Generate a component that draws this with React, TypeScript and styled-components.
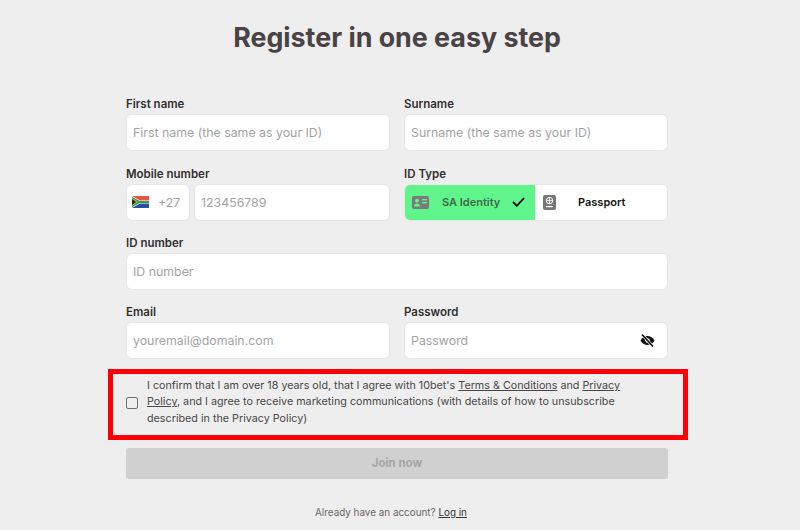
import React from "react";
import styled, { createGlobalStyle } from "styled-components";

const GlobalStyle = createGlobalStyle`
  html, body {
    margin: 0;
    padding: 0;
    background: #eeeeee;
    font-family: Inter, "Liberation Sans", sans-serif;
  }
  * {
    box-sizing: border-box;
  }
`;

const Page = styled.div`
  width: 794px;
  height: 530px;
  overflow: hidden;
  padding-top: 21px;
  display: flex;
  flex-direction: column;
  align-items: center;
`;

const Title = styled.h1`
  margin: 0;
  font-size: 26.8px;
  line-height: 33px;
  font-weight: 700;
  color: #4a4345;
`;

const Form = styled.form`
  width: 542px;
  margin-top: 43.4px;
  display: flex;
  flex-direction: column;
`;

const Row = styled.div`
  display: flex;
  gap: 14px;
  margin-bottom: 15.33px;
`;

const Field = styled.div`
  flex: 1;
  min-width: 0;
`;

const Label = styled.label`
  display: block;
  font-size: 11.5px;
  line-height: 15px;
  font-weight: 600;
  color: #333031;
  margin-bottom: 2px;
`;

const Input = styled.input`
  display: block;
  width: 100%;
  height: 37px;
  border: 1px solid #e6e6e6;
  border-radius: 6px;
  background: #fff;
  padding: 0 6px;
  font-family: inherit;
  font-size: 12.35px;
  color: #333;
  outline: none;

  &::placeholder {
    color: #a3a3a3;
    opacity: 1;
  }
`;

const PhoneRow = styled.div`
  display: flex;
  gap: 4px;
`;

const Prefix = styled.div`
  flex: none;
  width: 64px;
  height: 37px;
  border: 1px solid #e6e6e6;
  border-radius: 6px;
  background: #fff;
  display: flex;
  align-items: center;
  padding-left: 5px;
  gap: 9px;
  font-size: 12.35px;
  color: #a3a3a3;
`;

const Segments = styled.div`
  display: flex;
  height: 37px;
  border-radius: 6px;
  overflow: hidden;
  background: #fff;
  border: 1px solid #e6e6e6;
`;

const Segment = styled.div<{ $active?: boolean }>`
  flex: none;
  width: ${(p) => (p.$active ? "130px" : "132px")};
  display: flex;
  align-items: center;
  padding-left: ${(p) => (p.$active ? "7px" : "8px")};
  background: ${(p) => (p.$active ? "#60f58a" : "#fff")};
  font-size: 11px;
  font-weight: 600;
  color: ${(p) => (p.$active ? "#3d6a4a" : "#111")};
`;

const SegmentText = styled.span<{ $gap: number }>`
  margin-left: ${(p) => p.$gap}px;
`;

const Check = styled.svg`
  margin-left: 12px;
`;

const PasswordBox = styled.div`
  position: relative;
`;

const EyeButton = styled.span`
  position: absolute;
  right: 13px;
  top: 11px;
  display: flex;
`;

const Consent = styled.div`
  width: 580px;
  height: 71px;
  margin: -6px 0 8px -18px;
  border: 5px solid #fb0007;
  padding: 0 13px 3px;
  display: flex;
  align-items: center;
  gap: 9px;
`;

const CheckBox = styled.span`
  flex: none;
  width: 12px;
  height: 12px;
  border: 1.5px solid #6f6f6f;
  border-radius: 2px;
`;

const ConsentText = styled.p`
  margin: 0;
  width: 490px;
  font-size: 10.75px;
  line-height: 16.5px;
  color: #4a4648;
`;

const TextLink = styled.a`
  color: inherit;
  text-decoration: underline;
`;

const JoinButton = styled.button`
  height: 31px;
  border: none;
  border-radius: 3px;
  background: #d0d0d0;
  color: #a5a5a5;
  font-family: inherit;
  font-size: 11.5px;
  font-weight: 700;
`;

const Footer = styled.p`
  margin: 26px 0 0;
  padding-right: 12px;
  text-align: center;
  font-size: 9.9px;
  line-height: 14px;
  color: #6a6668;
`;

const FooterLink = styled(TextLink)`
  color: #333;
`;

const Flag = () => (
  <svg width="17" height="12" viewBox="0 0 17 12">
    <rect width="17" height="6" fill="#e8553f" />
    <rect y="6" width="17" height="6" fill="#2a4f9c" />
    <path d="M0 0l8 4.6h9v2.8H8L0 12z" fill="#fff" />
    <path d="M0 0.8l7.6 4.3h9.4v1.8H7.6L0 11.2z" fill="#2f9e5b" />
    <path d="M0 2l5.6 4L0 10z" fill="#e6b93a" />
    <path d="M0 3l4.2 3L0 9z" fill="#222" />
  </svg>
);

const IdCardIcon = () => (
  <svg width="17" height="13" viewBox="0 0 17 13">
    <rect width="17" height="13" rx="2" fill="#7a7a7a" />
    <circle cx="5" cy="4.7" r="1.9" fill="#60f58a" />
    <path d="M2 10.5c0-2 1.4-3 3-3s3 1 3 3z" fill="#60f58a" />
    <rect x="10" y="3" width="5" height="1.4" fill="#60f58a" />
    <rect x="10" y="6" width="5" height="1.4" fill="#60f58a" />
  </svg>
);

const PassportIcon = () => (
  <svg width="13" height="15" viewBox="0 0 13 15">
    <rect width="13" height="15" rx="2" fill="#777" />
    <circle cx="6.5" cy="5.6" r="3.2" fill="none" stroke="#fff" strokeWidth="1" />
    <path d="M3.3 5.6h6.4M6.5 2.4v6.4" stroke="#fff" strokeWidth="0.8" />
    <rect x="3" y="11" width="7" height="1.2" fill="#fff" />
  </svg>
);

const CheckMark = () => (
  <Check width="13" height="10" viewBox="0 0 13 10">
    <path d="M1 5l3.8 3.8L12 1.2" fill="none" stroke="#111" strokeWidth="1.8" />
  </Check>
);

const EyeOffIcon = () => (
  <svg width="15" height="15" viewBox="0 0 15 15">
    <path
      d="M0.5 7.5C2 4.6 4.5 3 7.5 3s5.5 1.6 7 4.5c-1.5 2.9-4 4.5-7 4.5s-5.5-1.6-7-4.5z"
      fill="#111"
    />
    <circle cx="7.5" cy="7.5" r="2.2" fill="#fff" />
    <path d="M2 1.5l11 12" stroke="#fff" strokeWidth="2.6" />
    <path d="M2 1.5l11 12" stroke="#111" strokeWidth="1.7" />
  </svg>
);

export default function App() {
  return (
    <Page>
      <GlobalStyle />
      <Title>Register in one easy step</Title>
      <Form>
        <Row>
          <Field>
            <Label>First name</Label>
            <Input placeholder="First name (the same as your ID)" />
          </Field>
          <Field>
            <Label>Surname</Label>
            <Input placeholder="Surname (the same as your ID)" />
          </Field>
        </Row>
        <Row>
          <Field>
            <Label>Mobile number</Label>
            <PhoneRow>
              <Prefix>
                <Flag />
                +27
              </Prefix>
              <Input placeholder="123456789" />
            </PhoneRow>
          </Field>
          <Field>
            <Label>ID Type</Label>
            <Segments>
              <Segment $active>
                <IdCardIcon />
                <SegmentText $gap={13}>SA Identity</SegmentText>
                <CheckMark />
              </Segment>
              <Segment>
                <PassportIcon />
                <SegmentText $gap={22}>Passport</SegmentText>
              </Segment>
            </Segments>
          </Field>
        </Row>
        <Row>
          <Field>
            <Label>ID number</Label>
            <Input placeholder="ID number" />
          </Field>
        </Row>
        <Row>
          <Field>
            <Label>Email</Label>
            <Input placeholder="youremail@domain.com" />
          </Field>
          <Field>
            <Label>Password</Label>
            <PasswordBox>
              <Input placeholder="Password" />
              <EyeButton>
                <EyeOffIcon />
              </EyeButton>
            </PasswordBox>
          </Field>
        </Row>
        <Consent>
          <CheckBox />
          <ConsentText>
            I confirm that I am over 18 years old, that I agree with 10bet's{" "}
            <TextLink>Terms &amp; Conditions</TextLink> and{" "}
            <TextLink>Privacy Policy</TextLink>, and I agree to receive marketing
            communications (with details of how to unsubscribe described in the
            Privacy Policy)
          </ConsentText>
        </Consent>
        <JoinButton type="button">Join now</JoinButton>
        <Footer>
          Already have an account? <FooterLink>Log in</FooterLink>
        </Footer>
      </Form>
    </Page>
  );
}
